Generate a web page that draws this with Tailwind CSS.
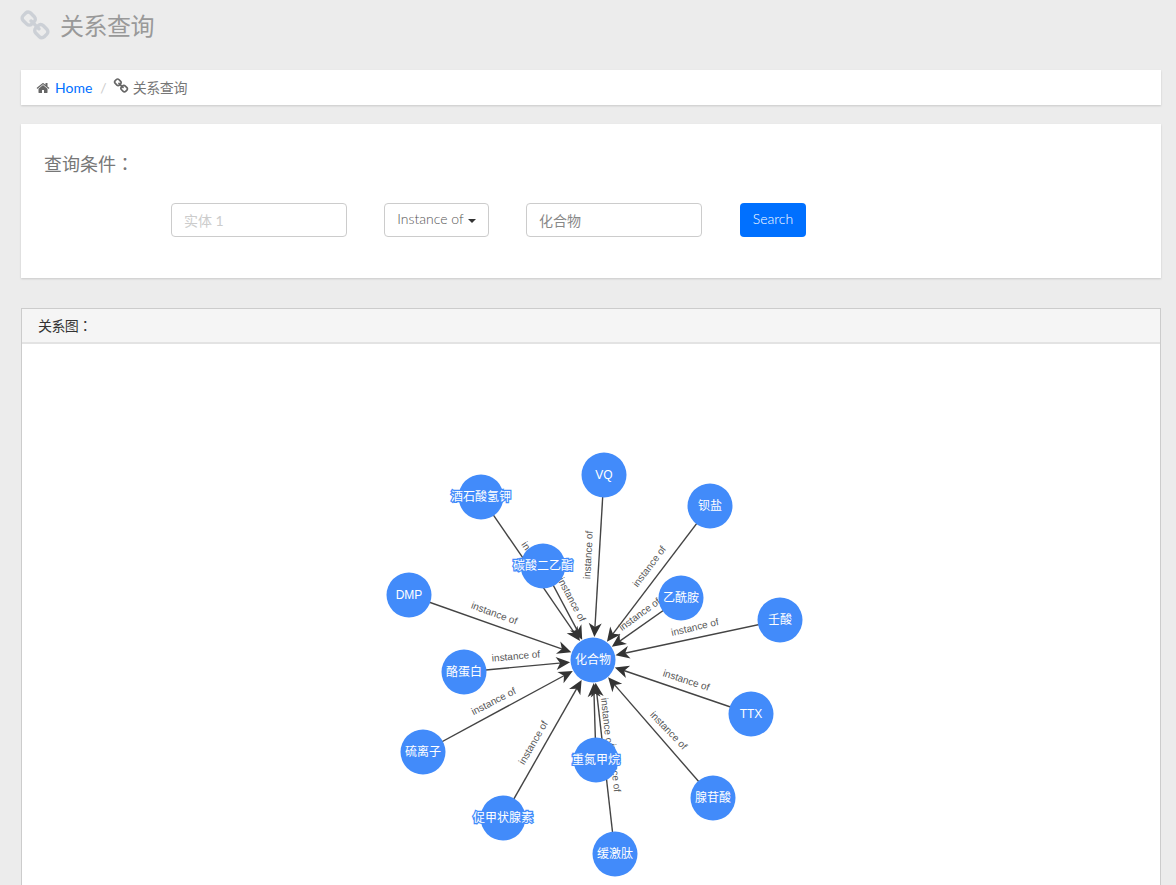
<!DOCTYPE html>
<html lang="zh">
<head>
    <meta charset="UTF-8">
    <title>关系查询</title>
    <script src="https://cdn.jsdelivr.net/npm/@tailwindcss/browser@4"></script>
</head>
<body class="bg-[#ececec] font-['Lato','Noto_Sans_CJK_SC',sans-serif] text-[14px] text-[#777]">
    <div class="h-[885px] overflow-hidden pl-[21px] pr-[15px]">
        <!-- page title -->
        <div class="flex h-[70px] items-start">
            <div class="flex h-[52px] items-center">
                <svg class="-ml-[2px] mr-[9px] h-[32px] w-[32px] fill-[#ccd0d6]" viewBox="0 0 1792 1792"><path d="M1520 1216q0-40-28-68l-208-208q-28-28-68-28-42 0-72 32 3 3 19 18.500t21.500 21.500 15 19 13 25.500 3.500 27.500q0 40-28 68t-68 28q-15 0-27.500-3.500t-25.500-13-19-15-21.500-21.500-18.500-19q-33 31-33 73 0 40 28 68l206 207q27 27 68 27 40 0 68-26l147-146q28-28 28-67zm-703-705q0-40-28-68l-206-207q-28-28-68-28-39 0-68 27l-147 146q-28 28-28 67 0 40 28 68l208 208q27 27 68 27 42 0 72-31-3-3-19-18.500t-21.500-21.500-15-19-13-25.500-3.500-27.500q0-40 28-68t68-28q15 0 27.500 3.500t25.500 13 19 15 21.500 21.500 18.500 19q33-31 33-73zm895 705q0 120-85 203l-147 146q-83 83-203 83-121 0-204-85l-206-207q-83-83-83-203 0-123 88-209l-88-88q-86 88-208 88-120 0-204-84l-208-208q-84-84-84-204t85-203l147-146q83-83 203-83 121 0 204 85l206 207q83 83 83 203 0 123-88 209l88 88q86-88 208-88 120 0 204 84l208 208q84 84 84 204z"/></svg>
                <h1 class="text-[24px] leading-none tracking-[-0.5px] text-[#999]">关系查询</h1>
            </div>
        </div>

        <!-- breadcrumb -->
        <div class="flex h-[35px] items-center bg-white pl-[15px] shadow-[0_1px_2px_rgba(0,0,0,0.15)]">
            <svg class="mr-[5px] h-[14px] w-[14px] fill-[#666]" viewBox="0 0 1792 1792"><path d="M1472 992v480q0 26-19 45t-45 19h-384v-384h-256v384h-384q-26 0-45-19t-19-45v-480q0-1 .5-3t.5-3l575-474 575 474q1 2 1 6zm223-69l-62 74q-8 9-21 11h-3q-13 0-21-7l-692-577-692 577q-12 8-24 7-13-2-21-11l-62-74q-8-10-7-23.500t11-21.500l719-599q32-26 76-26t76 26l244 204v-195q0-14 9-23t23-9h192q14 0 23 9t9 23v408l219 182q10 8 11 21.500t-7 23.500z"/></svg>
            <a class="text-[#0070ff]">Home</a>
            <span class="ml-[8px] mr-[6px] text-[#ccc]">/</span>
            <svg class="mb-[3px] mr-[4px] h-[16px] w-[16px] fill-[#666]" viewBox="0 0 1792 1792"><path d="M1520 1216q0-40-28-68l-208-208q-28-28-68-28-42 0-72 32 3 3 19 18.500t21.500 21.500 15 19 13 25.500 3.500 27.500q0 40-28 68t-68 28q-15 0-27.500-3.500t-25.500-13-19-15-21.500-21.500-18.500-19q-33 31-33 73 0 40 28 68l206 207q27 27 68 27 40 0 68-26l147-146q28-28 28-67zm-703-705q0-40-28-68l-206-207q-28-28-68-28-39 0-68 27l-147 146q-28 28-28 67 0 40 28 68l208 208q27 27 68 27 42 0 72-31-3-3-19-18.500t-21.500-21.500-15-19-13-25.500-3.500-27.500q0-40 28-68t68-28q15 0 27.500 3.500t25.500 13 19 15 21.500 21.500 18.500 19q33-31 33-73zm895 705q0 120-85 203l-147 146q-83 83-203 83-121 0-204-85l-206-207q-83-83-83-203 0-123 88-209l-88-88q-86 88-208 88-120 0-204-84l-208-208q-84-84-84-204t85-203l147-146q83-83 203-83 121 0 204 85l206 207q83 83 83 203 0 123-88 209l88 88q86-88 208-88 120 0 204 84l208 208q84 84 84 204z"/></svg>
            <span class="tracking-[-0.4px]">关系查询</span>
        </div>

        <!-- query form -->
        <div class="mt-[19px] h-[154px] bg-white pl-[23px] pt-[26px] shadow-[0_1px_2px_rgba(0,0,0,0.15)]">
            <h3 lang="zh-Hant" class="font-['Noto_Sans_CJK_TC',sans-serif] text-[18px] leading-[26px] text-[#777]">查询条件：</h3>
            <div class="flex items-center pl-[127px] pt-[27px]">
                <input class="h-[34px] w-[176px] rounded-[4px] border border-[#ccc] px-[12px] text-[14px] placeholder:text-[#ccc]" placeholder="实体 1">
                <button class="ml-[37px] flex h-[34px] w-[105px] items-center justify-center rounded-[4px] border border-[#ccc] bg-white pb-[4px] font-light text-[#555]">
                    Instance of
                    <span class="ml-[4px] mt-[5px] border-x-[4px] border-t-[4px] border-x-transparent border-t-[#333]"></span>
                </button>
                <input class="ml-[37px] h-[34px] w-[176px] rounded-[4px] border border-[#ccc] px-[12px] text-[14px] text-[#888]" value="化合物">
                <button class="ml-[38px] h-[34px] w-[66px] rounded-[4px] bg-[#0070ff] pb-[4px] font-light text-white">Search</button>
            </div>
        </div>

        <!-- graph panel -->
        <div class="mt-[30px] border border-[#ccc] bg-white">
            <div lang="zh-Hant" class="h-[35px] border-b-[2px] border-[#e3e3e3] bg-[#f5f5f5] pl-[16px] font-['Noto_Sans_CJK_TC',sans-serif] text-[14px] leading-[33px] tracking-[-0.6px] text-[#333]">关系图：</div>
            <svg id="graph" class="block" width="1138" height="560" viewBox="22 344 1138 560"></svg>
        </div>
    </div>

    <script>
        const NS = 'http://www.w3.org/2000/svg';
        const svg = document.getElementById('graph');
        const center = { name: '化合物', x: 593, y: 660 };

        // x, y = node centre; lx, ly, la = edge label centre and rotation
        const nodes = [
            { name: '酒石酸氢钾', x: 481, y: 497, lx: 537, ly: 563, la: 55 },
            { name: 'VQ', x: 604, y: 475, lx: 589, ly: 555, la: -87 },
            { name: '钡盐', x: 710, y: 506, lx: 650, ly: 567, la: -53 },
            { name: '碳酸二乙酯', x: 543, y: 566, lx: 571, ly: 600, la: 62 },
            { name: '乙酰胺', x: 681, y: 598, lx: 640, ly: 615, la: -36 },
            { name: '壬酸', x: 780, y: 620, lx: 695, ly: 628, la: -13 },
            { name: 'DMP', x: 409, y: 595, lx: 494, ly: 614, la: 20 },
            { name: '酪蛋白', x: 464, y: 672, lx: 516, ly: 657, la: -5 },
            { name: 'TTX', x: 751, y: 714, lx: 686, ly: 681, la: 18 },
            { name: '硫离子', x: 423, y: 752, lx: 494, ly: 702, la: -27 },
            { name: '腺苷酸', x: 713, y: 798, lx: 668, ly: 731, la: 46 },
            { name: '缓激肽', x: 615, y: 854, lx: 614, ly: 768, la: 84 },
            { name: '重氮甲烷', x: 596, y: 760, lx: 606, ly: 722, la: 84 },
            { name: '促甲状腺素', x: 503, y: 818, lx: 534, ly: 743, la: -60 },
        ];

        function add(tag, attrs, text) {
            const el = document.createElementNS(NS, tag);
            for (const k in attrs) el.setAttribute(k, attrs[k]);
            if (text) el.textContent = text;
            svg.appendChild(el);
            return el;
        }

        nodes.forEach(n => {
            const angle = Math.atan2(center.y - n.y, center.x - n.x);
            const deg = angle * 180 / Math.PI;
            const tipX = center.x - Math.cos(angle) * 23;
            const tipY = center.y - Math.sin(angle) * 23;
            add('line', { x1: n.x, y1: n.y, x2: tipX - Math.cos(angle) * 8, y2: tipY - Math.sin(angle) * 8, stroke: '#444', 'stroke-width': 1.4 });
            add('path', { d: 'M0,0 L-14,-6.5 L-10,0 L-14,6.5 Z', fill: '#333', transform: `translate(${tipX} ${tipY}) rotate(${deg})` });
        });

        nodes.forEach(n => {
            add('text', {
                x: 0, y: 0, 'font-size': 10, fill: '#555', 'text-anchor': 'middle', 'dominant-baseline': 'central',
                'font-family': '"Liberation Sans", sans-serif', 'text-rendering': 'geometricPrecision', opacity: 0.99,
                transform: `translate(${n.lx} ${n.ly}) rotate(${n.la})`
            }, 'instance of');
        });

        [...nodes, center].forEach(n => {
            add('circle', { cx: n.x, cy: n.y, r: 22.5, fill: '#428bfa' });
            add('text', {
                x: n.x, y: n.y, 'font-size': 12, fill: '#fff', 'text-anchor': 'middle', 'dominant-baseline': 'central',
                'font-family': '"Liberation Sans", "Noto Sans CJK SC", sans-serif',
                stroke: '#428bfa', 'stroke-width': 2.5, 'paint-order': 'stroke'
            }, n.name);
        });
    </script>
</body>
</html>
